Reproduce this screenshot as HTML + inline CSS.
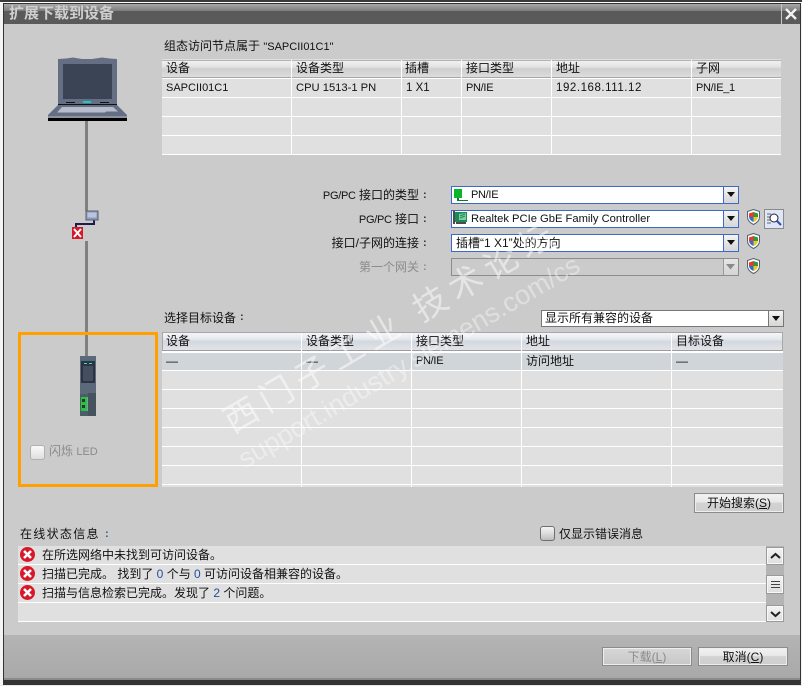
<!DOCTYPE html>
<html><head><meta charset="utf-8">
<style>
html,body{margin:0;padding:0}
body{width:802px;height:686px;overflow:hidden;position:relative;background:#f4f4f4;font-family:"Liberation Sans","WenQuanYi Zen Hei","Noto Sans CJK SC",sans-serif;font-size:12px;color:#111}
div,svg{position:absolute;box-sizing:border-box}
.t{white-space:nowrap;line-height:16px;height:16px}
.r{text-align:right}
.l{font-size:11px;letter-spacing:-.3px}
.c{color:#333;font-weight:bold;font-size:11px}
.hl{height:1px;background:#fff}
.vl{width:1px;background:#fff}
.dd{background:#fff;border:1px solid #3c69c8;height:18px}
.ar{background:linear-gradient(#f4f4f4,#d6d6d6);border-left:1px solid #3c69c8;position:absolute;top:0;bottom:0;right:0;width:15px}
.ar:after{content:"";position:absolute;left:3px;top:5px;border:4px solid transparent;border-top:5px solid #111;border-bottom:0}
.btn{border:1px solid #8b8b8b;box-shadow:inset 0 0 0 1px #eee;background:linear-gradient(#f2f2f2 0,#e8e8e8 45%,#d2d2d2 50%,#cfcfcf 100%);text-align:center;line-height:18px;white-space:nowrap}
.cb{width:15px;height:15px;border:1px solid #6f6f6f;border-radius:3px;background:linear-gradient(#f4f4f4,#dcdcdc 50%,#bdbdbd)}
.sb{left:766px;width:18px;background:linear-gradient(#f4f4f4,#dedede);border:1px solid #9a9a9a;box-shadow:inset 0 0 0 1px #f8f8f8}
.hd{background:linear-gradient(#f0f0f0 0,#e4e4e4 35%,#cfcfcf 50%,#dcdcdc 100%)}
.hd2{background:linear-gradient(#f3f5f8 0,#e6eaef 35%,#d3d8de 50%,#e1e4e8 100%)}
</style></head>
<body>
<!-- window frame -->
<div style="left:0;top:0;width:802px;height:2px;background:#3a3a3a"></div>
<div style="left:0;top:2px;width:802px;height:1px;background:#fff"></div>
<div style="left:3px;top:3px;width:798px;height:683px;background:#333"></div>
<div style="left:4px;top:4px;width:796px;height:7px;background:linear-gradient(#a8a8a8,#7c7c7c)"></div>
<div style="left:4px;top:11px;width:796px;height:13px;background:#5a5a5a"></div>
<div class="t" style="left:9px;top:5px;font-size:15px;line-height:18px;height:18px;color:#cfcfcf;font-weight:bold">扩展下载到设备</div>
<div style="left:781px;top:4px;width:1px;height:20px;background:#c8c8c8"></div>
<svg style="left:784px;top:7px" width="14" height="14" viewBox="0 0 14 14"><path d="M2 2L12 12M12 2L2 12" stroke="#f2f2f2" stroke-width="2.4"/></svg>
<!-- content bg -->
<div style="left:4px;top:24px;width:796px;height:611px;background:#cbcbcb"></div>
<div style="left:4px;top:635px;width:796px;height:43px;background:linear-gradient(#b4b4b4,#a9a9a9)"></div>
<div style="left:4px;top:678px;width:796px;height:2px;background:#8a8a8a"></div>
<div style="left:0;top:685px;width:802px;height:1px;background:#e8e8e8"></div>

<!-- laptop -->
<svg style="left:46px;top:55px" width="84" height="68" viewBox="46 55 84 68">
<path d="M58 59 L66 58.500 L73 57.500 L82 59 L92 59 L102 57.500 L110 58.500 L117 59 L117 105 L58 105Z" fill="#656f83"/>
<g shape-rendering="crispEdges">
<rect x="63" y="64" width="49" height="35" fill="#3b4454"/>
<rect x="66" y="102" width="9" height="1" fill="#111"/><rect x="83" y="101" width="8" height="2" fill="#1fc6c6"/><rect x="100" y="102" width="9" height="1" fill="#111"/>
<rect x="58" y="104" width="59" height="1" fill="#111"/>
</g>
<path d="M58 105H117L127 115V118H48V115Z" fill="#656f83"/>
<path d="M62 107H113L118 111.500H106L105 112.500H57Z" fill="#b6bccb"/>
<g shape-rendering="crispEdges">
<rect x="48" y="116" width="79" height="2" fill="#8c93a3"/>
<rect x="48" y="118" width="79" height="3" fill="#000"/>
</g>
</svg>
<div style="left:85px;top:121px;width:3px;height:90px;background:#808080"></div>
<div style="left:85px;top:241px;width:3px;height:116px;background:#808080"></div>
<!-- connector -->
<svg style="left:70px;top:208px" width="30" height="34" viewBox="70 208 30 34">
<path d="M76 228V224H94V219" fill="none" stroke="#1c1c50" stroke-width="2"/>
<rect x="86" y="211" width="12" height="9" fill="#8a9bbd" stroke="#5c5f68"/><rect x="87.500" y="212.500" width="9" height="5" fill="#b9c6de"/>
<rect x="72" y="227" width="11" height="12" fill="#d6172a"/>
<path d="M74 229L81 237M81 229L74 237" stroke="#fff" stroke-width="2"/>
</svg>
<!-- orange box -->
<div style="left:18px;top:332px;width:140px;height:155px;border:3px solid #ffa000"></div>
<!-- PLC -->
<svg style="left:80px;top:356px" width="16" height="60" viewBox="80 356 16 60" shape-rendering="crispEdges">
<rect x="80" y="356" width="16" height="60" fill="#5a6a7a"/>
<rect x="81" y="361" width="14" height="22" fill="#2c3444"/>
<rect x="83" y="366" width="10" height="15" fill="#444e5e"/>
<rect x="84" y="363" width="3" height="1" fill="#30e0c8"/><rect x="89" y="363" width="3" height="1" fill="#30e0c8"/>
<rect x="88" y="393" width="8" height="23" fill="#46525e"/>
<rect x="80" y="394" width="8" height="22" fill="#4e5c68"/>
<rect x="81" y="397" width="6" height="14" fill="#1fc83c"/>
<rect x="82" y="399" width="3" height="3" fill="#333"/><rect x="82" y="405" width="3" height="3" fill="#333"/>
<rect x="87" y="397" width="1" height="14" fill="#8a9aa0"/>
</svg>
<div class="cb" style="left:30px;top:445px;border-color:#b0b0b0;background:linear-gradient(#fafafa,#dedede)"></div>
<div class="t" style="left:49px;top:443px;color:#8a8a8a">闪烁 <span style="font-size:11px">LED</span></div>

<!-- top table -->
<div class="t" style="left:164px;top:38px">组态访问节点属于 <span style="font-size:11px">"SAPCII01C1"</span></div>
<div style="left:162px;top:59px;width:619px;height:96px;background:#e0e0e0"></div>
<div class="hd" style="left:162px;top:60px;width:619px;height:17px;border-top:1px solid #b4b4b4"></div>
<div style="left:162px;top:77px;width:619px;height:1px;background:#a8a8a8"></div>
<div class="hl" style="left:162px;top:78px;width:619px"></div>
<div class="hl" style="left:162px;top:97px;width:619px"></div>
<div class="hl" style="left:162px;top:116px;width:619px"></div>
<div class="hl" style="left:162px;top:135px;width:619px"></div>
<div class="hl" style="left:162px;top:154px;width:619px"></div>
<div class="vl" style="left:291px;top:60px;height:95px"></div>
<div class="vl" style="left:401px;top:60px;height:95px"></div>
<div class="vl" style="left:461px;top:60px;height:95px"></div>
<div class="vl" style="left:551px;top:60px;height:95px"></div>
<div class="vl" style="left:691px;top:60px;height:95px"></div>
<div class="t" style="left:166px;top:60px">设备</div>
<div class="t" style="left:296px;top:60px">设备类型</div>
<div class="t" style="left:405px;top:60px">插槽</div>
<div class="t" style="left:466px;top:60px">接口类型</div>
<div class="t" style="left:556px;top:60px">地址</div>
<div class="t" style="left:696px;top:60px">子网</div>
<div class="t" style="left:166px;top:80px;font-size:11px">SAPCII01C1</div>
<div class="t" style="left:296px;top:80px;font-size:11.200px">CPU 1513-1 PN</div>
<div class="t" style="left:406px;top:80px;font-size:11.500px">1 X1</div>
<div class="t l" style="left:466px;top:80px">PN/IE</div>
<div class="t" style="left:556px;top:80px;font-size:11.500px;letter-spacing:.55px">192.168.111.12</div>
<div class="t l" style="left:696px;top:80px">PN/IE_1</div>

<!-- form labels -->
<div class="t r" style="left:290px;width:129px;top:187px"><span class="l">PG/PC</span> 接口的类型</div>
<div class="t c" style="left:423px;top:187px">:</div>
<div class="t r" style="left:290px;width:129px;top:211px"><span class="l">PG/PC</span> 接口</div>
<div class="t c" style="left:423px;top:211px">:</div>
<div class="t r" style="left:290px;width:129px;top:235px">接口/子网的连接</div>
<div class="t c" style="left:423px;top:235px">:</div>
<div class="t r" style="left:290px;width:129px;top:259px;color:#8c8c8c">第一个网关</div>
<div class="t c" style="left:423px;top:259px;color:#8c8c8c">:</div>

<div class="dd" style="left:451px;top:186px;width:288px"><div class="ar"></div></div>
<svg style="left:453px;top:187px" width="16" height="15" viewBox="0 0 16 15" shape-rendering="crispEdges"><rect x="1" y="2" width="8" height="9" fill="#0bb52a"/><rect x="4" y="11" width="2" height="3" fill="#0c7a20"/><rect x="4" y="13" width="11" height="1" fill="#0c7a20"/></svg>
<div class="t l" style="left:471px;top:187px">PN/IE</div>

<div class="dd" style="left:451px;top:210px;width:288px"><div class="ar"></div></div>
<svg style="left:453px;top:211px" width="16" height="15" viewBox="0 0 16 15"><path d="M2 1H14V11H2Z" fill="#1d8a5a"/><path d="M6 3L13 2V9H6Z" fill="#7fd0a0"/><path d="M7 5L12 3M7 7L12 5" stroke="#1d8a5a"/><path d="M1 0V13M3 12H13" stroke="#111" stroke-width="1.500"/></svg>
<div class="t" style="left:471px;top:211px;font-size:11.200px">Realtek PCIe GbE Family Controller</div>

<div class="dd" style="left:451px;top:234px;width:288px"><div class="ar"></div></div>
<div class="t" style="left:456px;top:235px">插槽“1 X1”处的方向</div>

<div class="dd" style="left:451px;top:258px;width:288px;border:1px solid #8c8c8c;background:#cbcbcb"><div style="right:0;top:0;bottom:0;width:15px;border-left:1px solid #9a9a9a;background:linear-gradient(#e6e6e6,#d4d4d4)"></div><svg style="right:3px;top:5px" width="9" height="6"><path d="M0 0H9L4.500 5.500Z" fill="#8a8a8a"/></svg></div>

<!-- shields -->
<svg style="left:746px;top:209px" width="15" height="16" viewBox="0 0 15 16"><path d="M7.500 .5L13.500 2.500V8C13.500 11.500 10.500 14 7.500 15.500C4.500 14 1.500 11.500 1.500 8V2.500Z" fill="#fff" stroke="#55606e"/><path d="M7.500 3V8H3V4.500Z" fill="#e83a2a"/><path d="M7.500 3V8H12V4.500Z" fill="#2f9a3a"/><path d="M3 8H7.500V13C5 12 3.500 10.500 3 8Z" fill="#2b6fd8"/><path d="M12 8H7.500V13C10 12 11.500 10.500 12 8Z" fill="#f2c820"/></svg>
<svg style="left:746px;top:233px" width="15" height="16" viewBox="0 0 15 16"><path d="M7.500 .5L13.500 2.500V8C13.500 11.500 10.500 14 7.500 15.500C4.500 14 1.500 11.500 1.500 8V2.500Z" fill="#fff" stroke="#55606e"/><path d="M7.500 3V8H3V4.500Z" fill="#e83a2a"/><path d="M7.500 3V8H12V4.500Z" fill="#2f9a3a"/><path d="M3 8H7.500V13C5 12 3.500 10.500 3 8Z" fill="#2b6fd8"/><path d="M12 8H7.500V13C10 12 11.500 10.500 12 8Z" fill="#f2c820"/></svg>
<svg style="left:746px;top:258px" width="15" height="16" viewBox="0 0 15 16"><path d="M7.500 .5L13.500 2.500V8C13.500 11.500 10.500 14 7.500 15.500C4.500 14 1.500 11.500 1.500 8V2.500Z" fill="#fff" stroke="#55606e"/><path d="M7.500 3V8H3V4.500Z" fill="#e83a2a"/><path d="M7.500 3V8H12V4.500Z" fill="#2f9a3a"/><path d="M3 8H7.500V13C5 12 3.500 10.500 3 8Z" fill="#2b6fd8"/><path d="M12 8H7.500V13C10 12 11.500 10.500 12 8Z" fill="#f2c820"/></svg>
<!-- search btn -->
<svg style="left:764px;top:209px" width="20" height="20" viewBox="0 0 20 20"><rect x=".5" y=".5" width="19" height="19" fill="#dfe6f5" stroke="#8a8a8a"/><path d="M3 5H7M3 8H6M3 11H6M3 14H7" stroke="#666"/><circle cx="10" cy="9" r="4" fill="#fff" stroke="#223"/><path d="M13 12L17 16" stroke="#2a50b0" stroke-width="2"/></svg>

<!-- second section -->
<div class="t" style="left:164px;top:310px">选择目标设备</div>
<div class="t c" style="left:240px;top:309px">:</div>
<div style="left:541px;top:310px;width:243px;height:17px;background:#fff;border:1px solid #777"><div class="ar" style="border-left:1px solid #777"></div></div>
<div class="t" style="left:545px;top:310px">显示所有兼容的设备</div>

<div style="left:162px;top:332px;width:621px;height:155px;background:#e0e0e0"></div>
<div class="hd2" style="left:162px;top:332px;width:621px;height:19px;border:1px solid #a8a8a8;border-bottom:1px solid #9c9c9c"></div>
<div style="left:162px;top:351px;width:621px;height:2px;background:#fff"></div>
<div style="left:162px;top:353px;width:621px;height:17px;background:#d0d5da"></div>
<div class="hl" style="left:162px;top:370px;width:621px"></div>
<div class="hl" style="left:162px;top:389px;width:621px"></div>
<div class="hl" style="left:162px;top:408px;width:621px"></div>
<div class="hl" style="left:162px;top:427px;width:621px"></div>
<div class="hl" style="left:162px;top:446px;width:621px"></div>
<div class="hl" style="left:162px;top:465px;width:621px"></div>
<div class="hl" style="left:162px;top:484px;width:621px"></div>
<div class="vl" style="left:301px;top:333px;height:154px"></div>
<div class="vl" style="left:411px;top:333px;height:154px"></div>
<div class="vl" style="left:521px;top:333px;height:154px"></div>
<div class="vl" style="left:671px;top:333px;height:154px"></div>
<div class="t" style="left:166px;top:333px">设备</div>
<div class="t" style="left:306px;top:333px">设备类型</div>
<div class="t" style="left:416px;top:333px">接口类型</div>
<div class="t" style="left:526px;top:333px">地址</div>
<div class="t" style="left:676px;top:333px">目标设备</div>
<div class="t" style="left:166px;top:353px">—</div>
<div class="t" style="left:306px;top:353px">—</div>
<div class="t l" style="left:416px;top:353px">PN/IE</div>
<div class="t" style="left:526px;top:353px">访问地址</div>
<div class="t" style="left:676px;top:353px">—</div>

<div class="btn" style="left:694px;top:493px;width:90px;height:20px">开始搜索(<u>S</u>)</div>

<!-- status -->
<div class="t" style="left:20px;top:526px;letter-spacing:1.300px">在线状态信息</div>
<div class="t c" style="left:105px;top:526px;color:#2a5a90">:</div>
<div class="cb" style="left:540px;top:526px"></div>
<div class="t" style="left:559px;top:526px">仅显示错误消息</div>
<div style="left:18px;top:546px;width:748px;height:76px;background:#e0e0e0"></div>
<div class="hl" style="left:18px;top:564px;width:748px"></div>
<div class="hl" style="left:18px;top:583px;width:748px"></div>
<div class="hl" style="left:18px;top:602px;width:748px"></div>
<div class="hl" style="left:18px;top:621px;width:748px"></div>
<svg style="left:20px;top:547px" width="15" height="15" viewBox="0 0 15 15"><circle cx="7.500" cy="7.500" r="7.500" fill="#d8182a"/><path d="M4 4L11 11M11 4L4 11" stroke="#fff" stroke-width="2.600"/></svg>
<svg style="left:20px;top:566px" width="15" height="15" viewBox="0 0 15 15"><circle cx="7.500" cy="7.500" r="7.500" fill="#d8182a"/><path d="M4 4L11 11M11 4L4 11" stroke="#fff" stroke-width="2.600"/></svg>
<svg style="left:20px;top:585px" width="15" height="15" viewBox="0 0 15 15"><circle cx="7.500" cy="7.500" r="7.500" fill="#d8182a"/><path d="M4 4L11 11M11 4L4 11" stroke="#fff" stroke-width="2.600"/></svg>
<div class="t" style="left:42px;top:547px">在所选网络中未找到可访问设备。</div>
<div class="t" style="left:42px;top:566px">扫描已完成。 找到了 <span style="color:#1f4f9a">0</span> 个与 <span style="color:#1f4f9a">0</span> 可访问设备相兼容的设备。</div>
<div class="t" style="left:42px;top:585px">扫描与信息检索已完成。发现了 <span style="color:#1f4f9a">2</span> 个问题。</div>
<!-- scrollbar -->
<div style="left:766px;top:546px;width:18px;height:76px;background:#b4b4b4"></div>
<div class="sb" style="top:547px;height:18px"></div>
<svg style="left:770px;top:552px" width="11" height="8"><path d="M1 6L5.500 2L10 6" fill="none" stroke="#222" stroke-width="2"/></svg>
<div class="sb" style="top:575px;height:19px"></div>
<svg style="left:770px;top:580px" width="11" height="9"><path d="M1 1.500H10M1 4.500H10M1 7.500H10" stroke="#444"/></svg>
<div class="sb" style="top:605px;height:17px"></div>
<svg style="left:770px;top:610px" width="11" height="8"><path d="M1 2L5.500 6L10 2" fill="none" stroke="#222" stroke-width="2"/></svg>

<!-- footer btns -->
<div class="btn" style="left:602px;top:647px;width:90px;height:19px;color:#8a8a8a;background:linear-gradient(#d8d8d8,#c6c6c6)">下载(<u>L</u>)</div>
<div class="btn" style="left:698px;top:647px;width:90px;height:19px">取消(<u>C</u>)</div>

<!-- watermark -->
<div class="t" style="left:236px;top:398px;height:42px;line-height:42px;font-size:34px;letter-spacing:7px;color:rgba(255,255,255,.5);transform:rotate(-30.500deg);transform-origin:0 100%;font-family:'Noto Sans CJK SC',sans-serif;font-weight:400">西门子工业 技术论坛</div>
<div class="t" style="left:248px;top:444px;height:30px;line-height:30px;font-size:27px;color:rgba(255,255,255,.38);transform:rotate(-30.500deg);transform-origin:0 100%">support.industry.siemens.com/cs</div>
</body></html>
